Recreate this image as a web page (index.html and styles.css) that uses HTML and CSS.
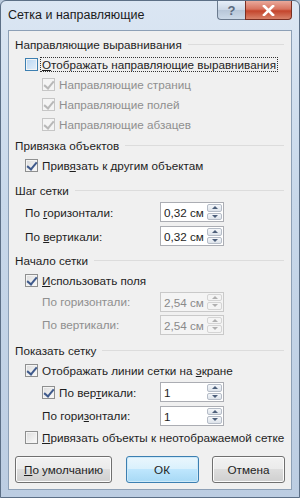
FILE: index.html
```html
<!DOCTYPE html>
<html lang="ru">
<head>
  <meta charset="UTF-8" />
  <title>Сетка и направляющие</title>
  <link rel="stylesheet" href="styles.css">
</head>
<body>
  <div class="window">
    <div class="titlebar">
      <span class="title">Сетка и направляющие</span>
      <div class="caption-buttons">
        <div class="cap help">?</div>
        <div class="cap close">
          <svg width="13" height="11" viewBox="0 0 13 11"><path d="M2 1 L11 10 M11 1 L2 10" stroke="#fff" stroke-width="2.6" stroke-linecap="square"/></svg>
        </div>
      </div>
    </div>
    <div class="client">
      <div class="section s1">
        <div class="group-title">Направляющие выравнивания</div>
        <div class="row"><span class="cb hover"></span><span class="lbl focus"><u>О</u>тображать направляющие выравнивания</span></div>
        <div class="row indent disabled"><span class="cb checked"></span><span class="lbl">Направляющие страниц</span></div>
        <div class="row indent disabled"><span class="cb checked"></span><span class="lbl">Направляющие полей</span></div>
        <div class="row indent disabled"><span class="cb checked"></span><span class="lbl">Направляющие абзацев</span></div>
      </div>
      <div class="section s2">
        <div class="group-title">Привязка объектов</div>
        <div class="row"><span class="cb checked"></span><span class="lbl">Прив<u>я</u>зать к другим объектам</span></div>
      </div>
      <div class="section s3">
        <div class="group-title">Шаг сетки</div>
        <div class="row field"><span class="flbl"><span>По <u>г</u>оризонтали:</span></span><div class="spin"><span class="val">0,32 см</span><div class="arrows"><i class="up"></i><i class="down"></i></div></div></div>
        <div class="row field"><span class="flbl"><span>По <u>в</u>ертикали:</span></span><div class="spin"><span class="val">0,32 см</span><div class="arrows"><i class="up"></i><i class="down"></i></div></div></div>
      </div>
      <div class="section s4">
        <div class="group-title">Начало сетки</div>
        <div class="row"><span class="cb checked"></span><span class="lbl"><u>И</u>спользовать поля</span></div>
        <div class="row field indent disabled"><span class="flbl"><span>По горизонтали:</span></span><div class="spin"><span class="val">2,54 см</span><div class="arrows"><i class="up"></i><i class="down"></i></div></div></div>
        <div class="row field indent disabled"><span class="flbl"><span>По вертикали:</span></span><div class="spin"><span class="val">2,54 см</span><div class="arrows"><i class="up"></i><i class="down"></i></div></div></div>
      </div>
      <div class="section s5">
        <div class="group-title">Показать сетку</div>
        <div class="row"><span class="cb checked"></span><span class="lbl">Отображать линии сетки на <u>э</u>кране</span></div>
        <div class="row field indent tall"><span class="flbl"><span class="cb checked"></span><span class="lbl">По вер<u>т</u>икали:</span></span><div class="spin"><span class="val">1</span><div class="arrows"><i class="up"></i><i class="down"></i></div></div></div>
        <div class="row field indent"><span class="flbl"><span>По гори<u>з</u>онтали:</span></span><div class="spin"><span class="val">1</span><div class="arrows"><i class="up"></i><i class="down"></i></div></div></div>
        <div class="row"><span class="cb"></span><span class="lbl"><u>П</u>ривязать объекты к неотображаемой сетке</span></div>
      </div>
      <div class="buttons">
        <button class="btn wide"><u>П</u>о умолчанию</button>
        <button class="btn default">ОК</button>
        <button class="btn">Отмена</button>
      </div>
    </div>
  </div>
</body>
</html>
```

FILE: styles.css
```css
* { box-sizing: border-box; }
body {
  margin: 0; background: #b9c9dc;
  font-family: "Liberation Sans", Arial, sans-serif;
  font-size: 11.7px; color: #1e1e1e;
  white-space: nowrap;
}

.window {
  width: 300px; height: 498px;
  background: linear-gradient(180deg, #dbe6f3 0%, #c8d8ea 40%, #bccde2 100%);
  border: 1px solid #5c6f86; border-radius: 6px 6px 0 0;
  display: flex; flex-direction: column;
}

.titlebar {
  height: 29px; display: flex;
  justify-content: space-between; align-items: flex-start;
  padding-left: 7px;
}
.title {
  margin-top: 7px; font-size: 12.5px; color: #1b1b1b;
}
.caption-buttons { display: flex; margin-right: 7px; }
.cap {
  height: 19px; display: flex;
  align-items: center; justify-content: center;
  border: 1px solid #6b7b8f; border-top: none;
}
.help {
  width: 28px; border-radius: 0 0 0 4px;
  background: linear-gradient(180deg, #e6eef8, #cbd7e6 50%, #b7c6d8 51%, #cbd9e8);
  color: #5a6a7f; font-size: 13px; font-weight: bold;
  border-right: none;
}
.close {
  width: 47px; border-radius: 0 0 4px 0;
  background: linear-gradient(180deg, #e9a99b, #d7735f 45%, #c4452c 55%, #d8826a);
  border-color: #7a2f22;
}

.client {
  flex: 1; margin: 0 7px 7px;
  background: #f0f0f0; border: 1px solid #8da0b6;
  padding: 3px 6px 0 6px;
}

.group-title {
  height: 20px; display: flex; align-items: center;
  gap: 6px; color: #1e1e1e;
}
.group-title::after {
  content: ""; flex: 1; height: 1px;
  background: #dcdcdc; margin-right: 1px;
}

.row {
  height: 20px; display: flex; align-items: center;
  padding-left: 10px;
}
.row.indent { padding-left: 27px; }
.row.field { height: 23px; }
.s3 .row.field, .row.field.tall { height: 24px; }
.s2 { margin-top: 1px; }
.s3 { margin-top: 5px; }
.s4 { margin-top: 2px; }
.s5 { margin-top: 4px; }

.lbl { margin-left: 3px; padding: 0 1px; }
.lbl.focus { outline: 1px dotted #333; outline-offset: 0; }
.disabled { color: #8f8f8f; }

.cb {
  width: 13px; height: 13px; flex: none;
  border: 1px solid #8e8f8f; position: relative;
  background: linear-gradient(135deg, #dcdcdc, #fbfbfb);
  box-shadow: inset 0 0 0 1px #f4f4f4;
}
.cb.hover {
  border-color: #3c7fb1;
  background: linear-gradient(135deg, #b9d6f2, #e4f0fb);
}
.cb.checked::after {
  content: ""; position: absolute;
  left: 3px; top: 0px; width: 4px; height: 8px;
  border: solid #3f5a8c; border-width: 0 2px 2px 0;
  transform: rotate(40deg);
}
.disabled .cb { border-color: #c6c6c6; background: #f4f4f4; }
.disabled .cb.checked::after { border-color: #b8b8b8; }

.flbl {
  width: 135px; display: flex; align-items: center;
}
.indent .flbl { width: 118px; }

.spin {
  width: 64px; height: 20px; display: flex;
  border: 1px solid #abadb3; background: #fff;
}
.val { flex: 1; padding: 1px 0 0 3px; line-height: 17px; color: #1e1e1e; }
.disabled .spin { background: #f4f4f4; border-color: #c9c9c9; }
.disabled .val { color: #8a8a8a; }
.arrows {
  width: 16px; display: flex; flex-direction: column;
  padding: 1px 1px 1px 0; gap: 1px;
}
.arrows i {
  flex: 1; display: flex; align-items: center; justify-content: center;
  border: 1px solid #b5bcc7; border-radius: 2px;
  background: linear-gradient(180deg, #f5f7fa, #dde3ea);
}
.arrows i::after {
  content: ""; width: 0; height: 0;
  border-left: 3px solid transparent; border-right: 3px solid transparent;
}
.arrows .up::after { border-bottom: 3px solid #4d5f7a; }
.arrows .down::after { border-top: 3px solid #4d5f7a; }
.disabled .arrows i { border-color: #d4d4d4; background: #f4f4f4; }
.disabled .arrows .up::after { border-bottom-color: #b0b0b0; }
.disabled .arrows .down::after { border-top-color: #b0b0b0; }

.buttons {
  display: flex; justify-content: space-between;
  margin-top: 9px;
}
.btn {
  height: 27px; width: 73px; padding: 0;
  font-family: inherit; font-size: 11.7px; color: #1e1e1e;
  border: 1px solid #707070; border-radius: 3px;
  background: linear-gradient(180deg, #f2f2f2 0%, #ebebeb 49%, #dddddd 50%, #cfcfcf 100%);
  box-shadow: inset 0 0 0 1px #fcfcfc;
}
.btn.wide { width: 97px; }
.btn.default {
  border-color: #3c7fb1;
  background: linear-gradient(180deg, #eaf6fd 0%, #d9f0fc 49%, #bee6fd 50%, #a7d9f5 100%);
  box-shadow: inset 0 0 0 1px #cde9f9;
}
```
